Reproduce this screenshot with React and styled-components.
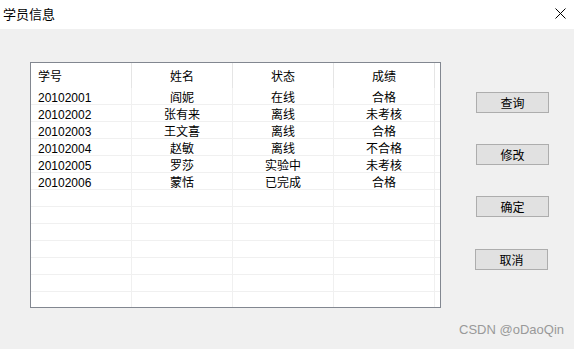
import React from 'react';
import styled, { createGlobalStyle } from 'styled-components';

const GlobalStyle = createGlobalStyle`
  html, body {
    margin: 0;
    padding: 0;
    background: #f0f0f0;
  }
  body {
    font-family: "Liberation Sans", "Noto Sans CJK SC", sans-serif;
    font-size: 12px;
    color: #000;
  }
`

const Window = styled.div`
  width: 574px;
  height: 349px;
  display: flex;
  flex-direction: column;
  background: #f0f0f0;
  overflow: hidden;
`
const TitleBar = styled.div`
  height: 29px;
  flex: none;
  background: #fff;
  display: flex;
  align-items: center;
  justify-content: space-between;
  padding: 0 8px 2px 3px;
  box-sizing: border-box;
`
const Title = styled.span`
  font-size: 13px;
  font-family: "Noto Sans CJK SC", sans-serif;
`
const CloseIcon = styled.svg`
  width: 11px;
  height: 11px;
`
const Body = styled.div`
  flex: 1;
  display: flex;
  flex-direction: column;
  padding: 33px 0 0 30px;
`
const Content = styled.div`
  display: flex;
  align-items: flex-start;
`
const Grid = styled.div`
  width: 411px;
  height: 246px;
  box-sizing: border-box;
  border: 1px solid #828790;
  background: #fff;
  overflow: hidden;
`
const Row = styled.div`
  display: flex;
  height: ${p => (p.$head ? '25px' : '16px')};
  border-bottom: ${p => (p.$head ? 'none' : '1px solid #f0f0f0')};
`
const Cell = styled.div`
  width: 101px;
  flex: none;
  border-right: 1px solid ${p => (p.$head ? '#e5e5e5' : '#f0f0f0')};
  display: flex;
  align-items: center;
  justify-content: ${p => (p.$left ? 'flex-start' : 'center')};
  padding-left: ${p => (p.$left ? '7px' : '0')};
  padding-top: ${p => (p.$head ? '2px' : '4px')};
  box-sizing: border-box;
  white-space: nowrap;
  line-height: 1;
`
const Buttons = styled.div`
  display: flex;
  flex-direction: column;
  margin: 30px 0 0 35px;
`
const Button = styled.button`
  width: 73px;
  height: 21px;
  box-sizing: border-box;
  border: 1px solid #adadad;
  background: #e1e1e1;
  font-family: "Noto Sans CJK SC", sans-serif;
  font-size: 12px;
  color: #000;
  padding: 0;
  margin-top: ${p => p.$gap || 0}px;
  margin-left: ${p => p.$shift || 0}px;
  line-height: 1;
`
const Footer = styled.div`
  margin-top: auto;
  align-self: flex-end;
  padding: 0 10px 12px 0;
  color: #999;
  font-size: 13px;
  font-family: "Liberation Sans", sans-serif;
`

const students = [
  ['20102001', '阎妮', '在线', '合格'],
  ['20102002', '张有来', '离线', '未考核'],
  ['20102003', '王文喜', '离线', '合格'],
  ['20102004', '赵敏', '离线', '不合格'],
  ['20102005', '罗莎', '实验中', '未考核'],
  ['20102006', '蒙恬', '已完成', '合格'],
];

const rows = [...students, ...Array.from({ length: 7 }, () => ['', '', '', ''])];

export default function App() {
  return (
    <Window>
      <GlobalStyle />
      <TitleBar>
        <Title>学员信息</Title>
        <CloseIcon viewBox="0 0 11 11">
          <path d="M0.5 0.5 L10.5 10.5 M10.5 0.5 L0.5 10.5" stroke="#000" strokeWidth="1" />
        </CloseIcon>
      </TitleBar>
      <Body>
        <Content>
          <Grid>
            <Row $head>
              <Cell $head $left>学号</Cell>
              <Cell $head>姓名</Cell>
              <Cell $head>状态</Cell>
              <Cell $head>成绩</Cell>
            </Row>
            {rows.map((r, i) => (
              <Row key={i}>
                <Cell $left>{r[0]}</Cell>
                <Cell>{r[1]}</Cell>
                <Cell>{r[2]}</Cell>
                <Cell>{r[3]}</Cell>
              </Row>
            ))}
          </Grid>
          <Buttons>
            <Button>查询</Button>
            <Button $gap={31}>修改</Button>
            <Button $gap={31}>确定</Button>
            <Button $gap={32} $shift={-1}>取消</Button>
          </Buttons>
        </Content>
        <Footer>CSDN @oDaoQin</Footer>
      </Body>
    </Window>
  );
}
